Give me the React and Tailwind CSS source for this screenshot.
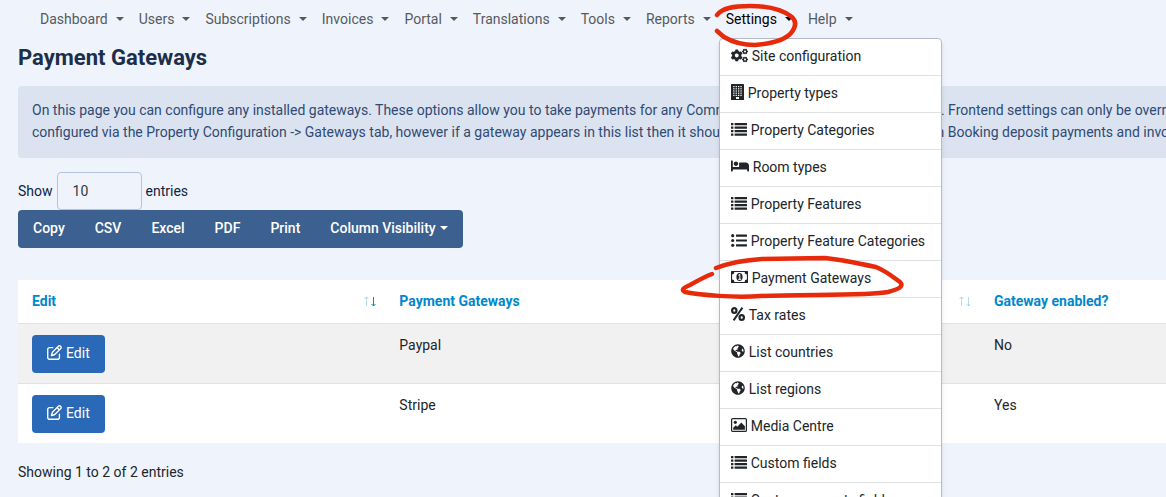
import React from "react";
import { FaBed, FaCogs, FaGlobeAmericas } from "react-icons/fa";
import { FaRegPenToSquare } from "react-icons/fa6";

const ListIcon = () => (
  <svg width="16" height="13" viewBox="0 0 16 13" fill="currentColor">
    {[0, 3.5, 7, 10.5].map((y) => (
      <React.Fragment key={y}>
        <rect x="0" y={y} width="2.4" height="2.3" rx="0.3" />
        <rect x="3.6" y={y} width="12.4" height="2.3" rx="0.3" />
      </React.Fragment>
    ))}
  </svg>
);

const BulletListIcon = () => (
  <svg width="16" height="13" viewBox="0 0 16 13" fill="currentColor">
    {[1.7, 6.5, 11.3].map((y) => (
      <React.Fragment key={y}>
        <circle cx="1.7" cy={y} r="1.6" />
        <rect x="5" y={y - 1.1} width="11" height="2.2" rx="0.3" />
      </React.Fragment>
    ))}
  </svg>
);

const BuildingIcon = () => (
  <svg width="13" height="16" viewBox="0 0 13 16" fill="currentColor">
    <rect width="13" height="16" rx="0.6" />
    <g fill="#fff">
      {[2, 4.2, 6.4, 8.6, 10.8].map((y) =>
        [2.2, 4.6, 7, 9.4].map((x) => <rect key={`${x}-${y}`} x={x} y={y} width="1.3" height="1.2" />)
      )}
      <rect x="5" y="13" width="3" height="2" />
    </g>
  </svg>
);

const MoneyIcon = () => (
  <svg width="17" height="12" viewBox="0 0 17 12" fill="currentColor">
    <path
      fillRule="evenodd"
      d="M.6 0h15.8q.6 0 .6.6v10.8q0 .6-.6.6H.6Q0 12 0 11.4V.6Q0 0 .6 0z
        M3.4 1.1A2.3 2.3 0 0 1 1.1 3.4v5.2A2.3 2.3 0 0 1 3.4 10.9h10.2a2.3 2.3 0 0 1 2.3-2.3V3.4a2.3 2.3 0 0 1-2.3-2.3z"
    />
    <ellipse cx="8.5" cy="6" rx="3.1" ry="4" />
    <path d="M7.3 4.3 8.8 3.3V8.3M7.2 8.3h3" fill="none" stroke="#fff" strokeWidth="1" />
  </svg>
);

const PercentIcon = () => (
  <svg width="14" height="14" viewBox="0 0 14 14" fill="none" stroke="currentColor">
    <ellipse cx="3.3" cy="3.5" rx="2.2" ry="2.4" strokeWidth="2.2" />
    <ellipse cx="10.7" cy="10.5" rx="2.2" ry="2.4" strokeWidth="2.2" />
    <path d="M11.4.6 2.6 13.4" strokeWidth="1.9" />
  </svg>
);

const PictureIcon = () => (
  <svg width="16" height="14" viewBox="0 0 16 14" fill="currentColor">
    <rect x=".6" y=".6" width="14.8" height="12.8" rx="1" fill="none" stroke="currentColor" strokeWidth="1.2" />
    <circle cx="4.3" cy="4.3" r="1.6" />
    <path d="M2.2 11.8V9.8L4.800 7.200l1.500 1.500 4-4.300 3.600 3.900v3.500z" />
  </svg>
);

const Caret = () => (
  <svg width="8" height="4" viewBox="0 0 8 4" fill="currentColor" className="shrink-0">
    <path d="M0 0h8L4 4z" />
  </svg>
);

const SortArrows = ({ active }) => (
  <svg width="14" height="11" viewBox="0 0 14 11" fill="none" stroke="#0088cc">
    <path d="M3.5 10V1M1.5 3l2-2 2 2" opacity="0.3" />
    <path d="M10.5 1v9M8.5 8l2 2 2-2" opacity={active ? 1 : 0.3} />
  </svg>
);

const NAV_LEFT = ["Dashboard", "Users", "Subscriptions", "Invoices", "Portal", "Translations", "Tools", "Reports"];

const SETTINGS_MENU = [
  { label: "Site configuration", icon: <FaCogs size={17} /> },
  { label: "Property types", icon: <BuildingIcon /> },
  { label: "Property Categories", icon: <ListIcon /> },
  { label: "Room types", icon: <FaBed size={18} /> },
  { label: "Property Features", icon: <ListIcon /> },
  { label: "Property Feature Categories", icon: <BulletListIcon /> },
  { label: "Payment Gateways", icon: <MoneyIcon /> },
  { label: "Tax rates", icon: <PercentIcon /> },
  { label: "List countries", icon: <FaGlobeAmericas size={14} /> },
  { label: "List regions", icon: <FaGlobeAmericas size={14} /> },
  { label: "Media Centre", icon: <PictureIcon /> },
  { label: "Custom fields", icon: <ListIcon /> },
  { label: "Custom property fields", icon: <ListIcon /> },
];

const EXPORTS = ["Copy", "CSV", "Excel", "PDF", "Print"];

const GATEWAYS = [
  { name: "Paypal", enabled: "No" },
  { name: "Stripe", enabled: "Yes" },
];

const NavButton = ({ label, open }) => (
  <button
    className={`flex items-center gap-2 ${open ? "text-black" : "text-[#555a60]"}`}
    aria-expanded={open}
  >
    {label}
    <Caret />
  </button>
);

const App = () => {
  return (
    <div className="relative h-screen overflow-hidden bg-[#eff4fc] font-['Roboto',sans-serif] text-sm text-[#212529]">
      {/* Navigation */}
      <nav className="flex items-center gap-[15px] pl-10 h-[38px]">
        {NAV_LEFT.map((label) => (
          <NavButton key={label} label={label} />
        ))}
        <div className="relative">
          <NavButton label="Settings" open />
          <ul className="absolute -left-[7px] top-[29px] z-10 w-[223px] rounded-sm border border-[#b4bccb] bg-white shadow-md">
            {SETTINGS_MENU.map((item) => (
              <li key={item.label} className="border-b border-[#dfe1e5] last:border-b-0">
                <a href="#" className="flex h-9 items-center gap-1 pb-0.5 pl-[11px] whitespace-nowrap [&>svg]:mb-0.5">
                  {item.icon}
                  {item.label}
                </a>
              </li>
            ))}
          </ul>
        </div>
        <NavButton label="Help" />
      </nav>

      <main className="pl-[18px]">
        <h1 className="text-[22px] leading-10 font-bold text-[#1c2f4a]">Payment Gateways</h1>

        {/* Notice */}
        <div className="mt-2 overflow-hidden rounded-l-sm bg-[#dce3f0] px-[14px] pt-[13px] pb-[15px] leading-[22px] whitespace-nowrap text-[#2f4a73]">
          <p>
            On this page you can configure any installed gateways. These options allow you to take payments for any
            Commission, Subscriptions, and Invoices. Frontend settings can only be overridden
          </p>
          <p>
            configured via the Property Configuration -&gt; Gateways tab, however if a gateway appears in this list then
            it should be possible to use them with both Booking deposit payments and invoices
          </p>
        </div>

        {/* Table controls */}
        <label className="mt-[14px] flex items-center gap-1 text-[#0f2343]">
          Show
          <select
            className="h-[38px] w-[85px] appearance-none rounded-sm border border-[#b3c4de] bg-transparent px-[15px] text-[#33373c]"
            defaultValue="10"
          >
            <option>10</option>
            <option>25</option>
          </select>
          entries
        </label>
        <div className="inline-flex h-[38px] items-center rounded-sm bg-[#3c608f] font-medium text-white align-top">
          {EXPORTS.map((label) => (
            <button key={label} className="h-full px-[15px] pb-0.5">
              {label}
            </button>
          ))}
          <button className="flex h-full items-center gap-1 px-[15px] pb-0.5">
            Column Visibility
            <Caret />
          </button>
        </div>

        {/* Gateways */}
        <table className="mt-8 w-full table-fixed bg-white text-left">
          <thead>
            <tr className="h-[43px] border-b border-[#dee2e6] text-[#0088cc]">
              <th className="w-[32%] px-[14px]">
                <div className="-mr-1.5 flex items-center justify-between">
                  Edit
                  <SortArrows active />
                </div>
              </th>
              <th className="px-[14px]">
                <div className="-mr-1.5 flex items-center justify-between">
                  Payment Gateways
                  <SortArrows />
                </div>
              </th>
              <th className="w-[186px] px-[14px]">Gateway enabled?</th>
            </tr>
          </thead>
          <tbody>
            {GATEWAYS.map((gateway) => (
              <tr
                key={gateway.name}
                className="border-b border-[#dee2e6] align-top odd:bg-[#f1f1f1] last:border-b-0"
              >
                <td className="px-[14px] pt-[11px] pb-[10px]">
                  <button className="flex h-[38px] items-center gap-1 rounded-sm bg-[#2a69b8] px-[15px] pb-0.5 text-white">
                    <FaRegPenToSquare size={15} />
                    Edit
                  </button>
                </td>
                <td className="px-[14px] py-[11px]">{gateway.name}</td>
                <td className="px-[14px] py-[11px]">{gateway.enabled}</td>
              </tr>
            ))}
          </tbody>
        </table>
        <p className="mt-[19px]">Showing 1 to 2 of 2 entries</p>
      </main>

      {/* Hand-drawn marks over the menu */}
      <svg
        width="240"
        height="310"
        viewBox="675 0 240 310"
        fill="none"
        stroke="#e62a0a"
        strokeWidth="4.5"
        strokeLinecap="round"
        strokeLinejoin="round"
        className="pointer-events-none absolute left-[675px] top-0 z-20"
      >
        <path d="M717 15C722 8 733 6 750 6C768 6 783 10 792 17C797 22 796 27 791 33C784 41 768 44 755 45C740 45 729 40 724 37L717 31" />
        <path d="M716 268C732 262 746 260 762 259L825 258C845 260 860 264 876 267C886 271 893 277 900 282C904 286 900 289 888 292C870 296 800 294 760 296C735 298 700 295 685 292C681 290 683 288 690 285C697 281 704 277 712 274" />
      </svg>
    </div>
  );
};

export default App;
